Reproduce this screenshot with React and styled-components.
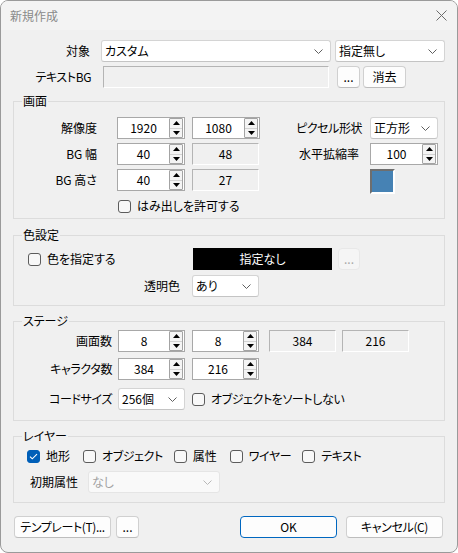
import styled, { createGlobalStyle } from "styled-components";

const GlobalStyle = createGlobalStyle`
  html, body {
    margin: 0;
    padding: 0;
    background: #ffffff;
  }
  body {
    font-family: "Noto Sans CJK JP", "Noto Sans", sans-serif;
    font-size: 12px;
    line-height: 16px;
    color: #000;
    font-feature-settings: "palt" 1;
  }
  * {
    box-sizing: border-box;
  }
`;

const Window = styled.div`
  width: 458px;
  height: 553px;
  border: 1px solid #9a9a9a;
  border-radius: 8px;
  background: #f0f0f0;
  overflow: hidden;
  display: flex;
  flex-direction: column;
`;

const TitleBar = styled.div`
  height: 29px;
  flex: none;
  display: flex;
  align-items: center;
  justify-content: space-between;
  padding: 0 10px 0 9px;
  background: #f3f3f3;
`;

const Title = styled.span`
  color: #8a8a8a;
`;

const CloseIcon = styled.svg`
  display: block;
`;

const Body = styled.div`
  padding: 10px 12px 0;
`;

const Row = styled.div`
  display: flex;
  align-items: ${(p) => p.$align || "center"};
  margin-top: ${(p) => p.$mt || 0}px;
`;

const Label = styled.span`
  flex: none;
  width: ${(p) => p.$w}px;
  margin-left: ${(p) => p.$ml || 0}px;
  text-align: ${(p) => p.$align || "right"};
  white-space: nowrap;
  letter-spacing: ${(p) => p.$tight || 0}px;
  line-height: ${(p) => p.$lh || 16}px;
`;

const ComboBox = styled.div`
  flex: none;
  width: ${(p) => p.$w}px;
  height: 22px;
  margin-left: ${(p) => p.$ml || 0}px;
  display: flex;
  align-items: center;
  justify-content: space-between;
  padding: 0 7px 0 3px;
  background: ${(p) => (p.$disabled ? "#f9f9f9" : "#ffffff")};
  border: 1px solid ${(p) => (p.$disabled ? "#e5e5e5" : "#d4d4d4")};
  border-bottom-color: ${(p) => (p.$disabled ? "#e5e5e5" : "#c4c4c4")};
  border-radius: 3px;
  color: ${(p) => (p.$disabled ? "#a2a2a2" : "#000")};
`;

const Chevron = styled.svg`
  display: block;
  flex: none;
`;

function Combo({ w, ml, disabled, children }) {
  return (
    <ComboBox $w={w} $ml={ml} $disabled={disabled}>
      <span>{children}</span>
      <Chevron width="9" height="5" viewBox="0 0 9 5">
        <path
          d="M0.5 0.5 L4.5 4.5 L8.5 0.5"
          fill="none"
          stroke={disabled ? "#b8b8b8" : "#5f5f5f"}
          strokeWidth="1"
        />
      </Chevron>
    </ComboBox>
  );
}

const TextField = styled.div`
  flex: none;
  width: ${(p) => p.$w}px;
  height: 22px;
  margin-left: ${(p) => p.$ml || 0}px;
  background: #f0f0f0;
  border: 1px solid;
  border-color: #b4b4b4 #ffffff #ffffff #b4b4b4;
`;

const ReadOnlyBox = styled.div`
  flex: none;
  width: ${(p) => p.$w}px;
  height: 22px;
  margin-left: ${(p) => p.$ml || 0}px;
  display: flex;
  align-items: center;
  justify-content: center;
  background: #f0f0f0;
  border: 1px solid;
  border-color: #b4b4b4 #ffffff #ffffff #b4b4b4;
`;

const Button = styled.div`
  flex: none;
  width: ${(p) => p.$w}px;
  height: 22px;
  margin-left: ${(p) => p.$ml || 0}px;
  display: flex;
  align-items: center;
  justify-content: center;
  white-space: nowrap;
  letter-spacing: ${(p) => p.$tight || 0}px;
  background: ${(p) => (p.$disabled ? "#f5f5f5" : "#fdfdfd")};
  border: 1px solid
    ${(p) => (p.$primary ? "#0067c0" : p.$disabled ? "#e8e8e8" : "#d0d0d0")};
  border-bottom-color: ${(p) =>
    p.$primary ? "#0067c0" : p.$disabled ? "#e8e8e8" : "#bdbdbd"};
  border-radius: 4px;
  color: ${(p) => (p.$disabled ? "#a8a8a8" : "#000")};
`;

const SpinFrame = styled.div`
  flex: none;
  width: ${(p) => p.$w}px;
  height: 22px;
  margin-left: ${(p) => p.$ml || 0}px;
  display: flex;
  background: #ffffff;
  border: 1px solid #a8a8a8;
`;

const SpinValue = styled.span`
  flex: 1;
  display: flex;
  align-items: center;
  justify-content: center;
`;

const SpinButtons = styled.div`
  flex: none;
  width: 14px;
  margin: 0 1px 0 0;
  display: flex;
  flex-direction: column;
  border: 1px solid #a3a3a3;
  border-radius: 1px;
  background: #f4f4f4;
`;

const SpinButton = styled.div`
  flex: 1;
  display: flex;
  align-items: center;
  justify-content: center;
  & + & {
    border-top: 1px solid #d2d2d2;
  }
`;

function Spinner({ value, w = 68, ml }) {
  return (
    <SpinFrame $w={w} $ml={ml}>
      <SpinValue>{value}</SpinValue>
      <SpinButtons>
        <SpinButton>
          <svg width="7" height="4" viewBox="0 0 7 4">
            <polygon points="0,4 3.5,0 7,4" fill="#000" />
          </svg>
        </SpinButton>
        <SpinButton>
          <svg width="7" height="4" viewBox="0 0 7 4">
            <polygon points="0,0 3.5,4 7,0" fill="#000" />
          </svg>
        </SpinButton>
      </SpinButtons>
    </SpinFrame>
  );
}

const Group = styled.fieldset`
  margin: ${(p) => p.$mt || 0}px 0 0;
  padding: ${(p) => p.$pt || 0}px 0 ${(p) => p.$pb || 0}px;
  min-inline-size: 0;
  border: 1px solid #dcdcdc;
`;

const Legend = styled.legend`
  margin-left: 8px;
  padding: 0 1px;
  line-height: 16px;
`;

const CheckItem = styled.div`
  flex: none;
  width: ${(p) => (p.$w ? `${p.$w}px` : "auto")};
  margin-left: ${(p) => p.$ml || 0}px;
  margin-right: ${(p) => p.$mr || 0}px;
  display: flex;
  align-items: center;
  gap: 6px;
  white-space: nowrap;
  letter-spacing: ${(p) => p.$tight || 0}px;
`;

const CheckBox = styled.span`
  flex: none;
  width: 13px;
  height: 13px;
  display: flex;
  align-items: center;
  justify-content: center;
  border-radius: 3px;
  border: 1px solid ${(p) => (p.$checked ? "#005fb8" : "#5c5c5c")};
  background: ${(p) => (p.$checked ? "#005fb8" : "#f8f8f8")};
`;

function Check({ label, checked, w, ml, mr, tight }) {
  return (
    <CheckItem $w={w} $ml={ml} $mr={mr} $tight={tight}>
      <CheckBox $checked={checked}>
        {checked && (
          <svg width="9" height="7" viewBox="0 0 9 7">
            <path
              d="M1 3.6 L3.3 5.8 L8 1.2"
              fill="none"
              stroke="#ffffff"
              strokeWidth="1.1"
            />
          </svg>
        )}
      </CheckBox>
      <span>{label}</span>
    </CheckItem>
  );
}

const Swatch = styled.div`
  flex: none;
  width: 25px;
  height: 25px;
  margin-left: ${(p) => p.$ml || 0}px;
  background: #4682b4;
  border: 2px solid;
  border-color: #6e6e6e #ffffff #ffffff #6e6e6e;
`;

const ColorBar = styled.div`
  flex: none;
  width: ${(p) => p.$w}px;
  height: 22px;
  margin-left: ${(p) => p.$ml || 0}px;
  display: flex;
  align-items: center;
  justify-content: center;
  background: #000000;
  color: #ffffff;
`;

const ButtonBar = styled.div`
  display: flex;
  justify-content: space-between;
  margin-top: 13px;
  padding: 0 2px 0 1px;
`;

const ButtonGroup = styled.div`
  display: flex;
`;

export default function App() {
  return (
    <>
      <GlobalStyle />
      <Window>
        <TitleBar>
          <Title>新規作成</Title>
          <CloseIcon width="11" height="11" viewBox="0 0 11 11">
            <path d="M0.5 0.5 L10.5 10.5 M10.5 0.5 L0.5 10.5" stroke="#6b6b6b" strokeWidth="1" />
          </CloseIcon>
        </TitleBar>
        <Body>
          <Row>
            <Label $w={77}>対象</Label>
            <Combo w={230} ml={11}>カスタム</Combo>
            <Combo w={110} ml={4}>指定無し</Combo>
          </Row>
          <Row $mt={4}>
            <Label $w={78} $tight={-0.4}>テキストBG</Label>
            <TextField $w={226} $ml={12} />
            <Button $w={23} $ml={8}>...</Button>
            <Button $w={43} $ml={3}>消去</Button>
          </Row>

          <Group $mt={5} $pt={8} $pb={4}>
            <Legend>画面</Legend>
            <Row>
              <Label $w={83}>解像度</Label>
              <Spinner value="1920" ml={20} />
              <Spinner value="1080" ml={7} />
              <Label $w={66} $ml={36} $align="left" $tight={-0.4}>ピクセル形状</Label>
              <Combo w={68} ml={8}>正方形</Combo>
            </Row>
            <Row $mt={4}>
              <Label $w={83}>BG 幅</Label>
              <Spinner value="40" ml={20} />
              <ReadOnlyBox $w={67} $ml={7}>48</ReadOnlyBox>
              <Label $w={62} $ml={40} $align="left">水平拡縮率</Label>
              <Spinner value="100" ml={9} />
            </Row>
            <Row $mt={4} $align="flex-start">
              <Label $w={83} $lh={22}>BG 高さ</Label>
              <Spinner value="40" ml={20} />
              <ReadOnlyBox $w={67} $ml={7}>27</ReadOnlyBox>
              <Swatch $ml={111} />
            </Row>
            <Row $mt={4}>
              <Check label="はみ出しを許可する" ml={104} />
            </Row>
          </Group>

          <Group $mt={8} $pt={5} $pb={8}>
            <Legend>色設定</Legend>
            <Row>
              <Check label="色を指定する" w={165} ml={14} />
              <ColorBar $w={139}>指定なし</ColorBar>
              <Button $w={22} $ml={6} $disabled>...</Button>
            </Row>
            <Row $mt={5}>
              <Label $w={166}>透明色</Label>
              <Combo w={67} ml={12}>あり</Combo>
            </Row>
          </Group>

          <Group $mt={7} $pt={1} $pb={10}>
            <Legend>ステージ</Legend>
            <Row>
              <Label $w={98}>画面数</Label>
              <Spinner value="8" w={67} ml={6} />
              <Spinner value="8" w={67} ml={7} />
              <ReadOnlyBox $w={67} $ml={10}>384</ReadOnlyBox>
              <ReadOnlyBox $w={67} $ml={6}>216</ReadOnlyBox>
            </Row>
            <Row $mt={6}>
              <Label $w={98} $tight={-0.4}>キャラクタ数</Label>
              <Spinner value="384" w={67} ml={6} />
              <Spinner value="216" w={67} ml={7} />
            </Row>
            <Row $mt={8}>
              <Label $w={98} $tight={-0.4}>コードサイズ</Label>
              <Combo w={67} ml={6}>256個</Combo>
              <Check label="オブジェクトをソートしない" ml={7} tight={-0.4} />
            </Row>
          </Group>

          <Group $mt={7} $pt={4} $pb={9}>
            <Legend>レイヤー</Legend>
            <Row>
              <Check label="地形" checked w={56} ml={13} />
              <Check label="オブジェクト" mr={11} tight={-0.4} />
              <Check label="属性" w={56} />
              <Check label="ワイヤー" mr={11} tight={-0.4} />
              <Check label="テキスト" tight={-0.4} />
            </Row>
            <Row $mt={7}>
              <Label $w={48} $ml={16} $align="left">初期属性</Label>
              <Combo w={132} ml={10} disabled>なし</Combo>
            </Row>
          </Group>

          <ButtonBar>
            <ButtonGroup>
              <Button $w={97} $tight={-0.4}>テンプレート(T)...</Button>
              <Button $w={23} $ml={5}>...</Button>
            </ButtonGroup>
            <ButtonGroup>
              <Button $w={97} $primary>OK</Button>
              <Button $w={97} $ml={9} $tight={-0.4}>キャンセル(C)</Button>
            </ButtonGroup>
          </ButtonBar>
        </Body>
      </Window>
    </>
  );
}
